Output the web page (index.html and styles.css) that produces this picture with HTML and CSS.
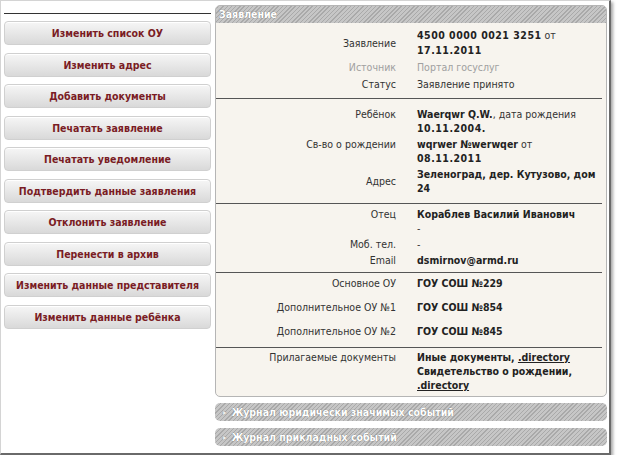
FILE: index.html
```html
<!DOCTYPE html>
<html lang="ru">
<head>
  <meta charset="UTF-8">
  <meta name="viewport" content="width=device-width, initial-scale=1.0">
  <title>Заявление</title>
  <link rel="stylesheet" href="styles.css">
</head>
<body>
  <div class="frame">
    <div class="actions">
      <button class="action-button">Изменить список ОУ</button>
      <button class="action-button">Изменить адрес</button>
      <button class="action-button">Добавить документы</button>
      <button class="action-button">Печатать заявление</button>
      <button class="action-button">Печатать уведомление</button>
      <button class="action-button">Подтвердить данные заявления</button>
      <button class="action-button">Отклонить заявление</button>
      <button class="action-button">Перенести в архив</button>
      <button class="action-button">Изменить данные представителя</button>
      <button class="action-button">Изменить данные ребёнка</button>
    </div>

    <div class="details">
      <div class="panel">
        <div class="panel-title">Заявление</div>
        <div class="panel-body">
          <div class="group group-request">
            <div class="row row-middle">
              <div class="label">Заявление</div>
              <div class="value"><b class="num">4500 0000 0021 3251</b> от <b class="num">17.11.2011</b></div>
            </div>
            <div class="row muted">
              <div class="label">Источник</div>
              <div class="value">Портал госуслуг</div>
            </div>
            <div class="row">
              <div class="label">Статус</div>
              <div class="value">Заявление принято</div>
            </div>
          </div>

          <div class="group group-child">
            <div class="row">
              <div class="label">Ребёнок</div>
              <div class="value"><b>Waerqwr Q.W.</b>, дата рождения <b class="num">10.11.2004.</b></div>
            </div>
            <div class="row">
              <div class="label">Св-во о рождении</div>
              <div class="value"><b>wqrwer №werwqer</b> от <b class="num">08.11.2011</b></div>
            </div>
            <div class="row row-middle">
              <div class="label">Адрес</div>
              <div class="value"><b>Зеленоград, дер. Кутузово, дом 24</b></div>
            </div>
          </div>

          <div class="group group-parent">
            <div class="row">
              <div class="label">Отец</div>
              <div class="value"><b>Кораблев Василий Иванович</b><br>-</div>
            </div>
            <div class="row">
              <div class="label">Моб. тел.</div>
              <div class="value">-</div>
            </div>
            <div class="row">
              <div class="label">Email</div>
              <div class="value"><b>dsmirnov@armd.ru</b></div>
            </div>
          </div>

          <div class="group group-schools">
            <div class="row row-tall">
              <div class="label">Основное ОУ</div>
              <div class="value"><b>ГОУ СОШ №229</b></div>
            </div>
            <div class="row row-tall">
              <div class="label">Дополнительное ОУ №1</div>
              <div class="value"><b>ГОУ СОШ №854</b></div>
            </div>
            <div class="row row-tall">
              <div class="label">Дополнительное ОУ №2</div>
              <div class="value"><b>ГОУ СОШ №845</b></div>
            </div>
          </div>

          <div class="group group-docs">
            <div class="row">
              <div class="label">Прилагаемые документы</div>
              <div class="value">
                <b>Иные документы, <a href="#">.directory</a></b><br>
                <b>Свидетельство о рождении, <a href="#">.directory</a></b>
              </div>
            </div>
          </div>
        </div>
      </div>

      <div class="collapsed-bar">Журнал юридически значимых событий</div>
      <div class="collapsed-bar">Журнал прикладных событий</div>
    </div>
  </div>
</body>
</html>
```

FILE: styles.css
```css
* {
  margin: 0;
  padding: 0;
  box-sizing: border-box;
}

body {
  font-family: "DejaVu Sans Condensed", "DejaVu Sans", sans-serif;
  font-stretch: condensed;
  font-size: 10.5px;
  color: #333;
  background: #fff;
}

.frame {
  width: 611px;
  height: 455px;
  display: flex;
  gap: 4px;
  padding: 4px 2px 0 3px;
  background: #fff;
  border-left: 1px solid #d4d4d4;
  border-top: 1px solid #d4d4d4;
  border-right: 2px solid #6a6a6a;
  border-bottom: 2px solid #6a6a6a;
  box-shadow: 2px 2px 3px rgba(0, 0, 0, 0.35);
}

/* left column with action buttons */
.actions {
  width: 207px;
  flex-shrink: 0;
  display: flex;
  flex-direction: column;
  gap: 7.5px;
  margin-top: 8px;
  padding-top: 7px;
  border-top: 1px solid #333;
}

.action-button {
  height: 24px;
  font-family: inherit;
  font-stretch: condensed;
  font-size: 10.5px;
  font-weight: bold;
  color: #7a1c24;
  background: linear-gradient(#f6f6f6, #d9d9d9);
  border: 1px solid #d0d0d0;
  border-radius: 4px;
  box-shadow: inset 0 1px 0 #fff;
  cursor: pointer;
}

/* right column */
.details {
  width: 392px;
  display: flex;
  flex-direction: column;
}

.panel {
  border: 1px solid #b5b5b5;
  border-radius: 5px;
  overflow: hidden;
  background: #f7f4ee;
}

.panel-title,
.collapsed-bar {
  height: 17px;
  line-height: 17px;
  padding-left: 3px;
  font-weight: bold;
  color: #fff;
  text-shadow: 0 0 1px #666;
  background: repeating-linear-gradient(-45deg, #a9a9a9 0, #a9a9a9 1px, #c6c6c6 1px, #c6c6c6 3px);
}

.panel-body {
  padding-right: 4px;
}

.group {
  border-bottom: 1px solid #555;
}

.group:last-child {
  border-bottom: none;
}

.group-request { padding: 4px 0 5px; line-height: 15px; }
.group-child { padding: 7px 0 7px; }
.group-parent { padding: 2px 0 4px; }
.group-schools { padding: 0 0 2px; }
.group-docs { padding: 1px 0 3px; }

.row {
  display: grid;
  grid-template-columns: 180px 180px;
  column-gap: 21px;
  padding: 1px 0;
}

.group-child .row,
.group-parent .row,
.group-schools .row,
.group-docs .row {
  line-height: 14px;
}

.row .label {
  text-align: right;
}

.row-middle .label {
  align-self: center;
}

.group-schools .row-tall {
  padding: 3px 0 7px;
}

.value b {
  color: #222;
}

.value .num {
  letter-spacing: 0.5px;
}

.value a {
  color: #222;
  text-decoration: underline;
}

.muted .label,
.muted .value {
  color: #a0a0a0;
}

.collapsed-bar {
  margin-top: 6px;
  border-radius: 5px;
  height: 18px;
  line-height: 18px;
  padding-left: 8px;
}

.collapsed-bar + .collapsed-bar {
  margin-top: 7px;
}

.collapsed-bar::before {
  content: "▸";
  font-size: 8px;
  color: #eee;
  margin-right: 5px;
  vertical-align: 1px;
}
```
